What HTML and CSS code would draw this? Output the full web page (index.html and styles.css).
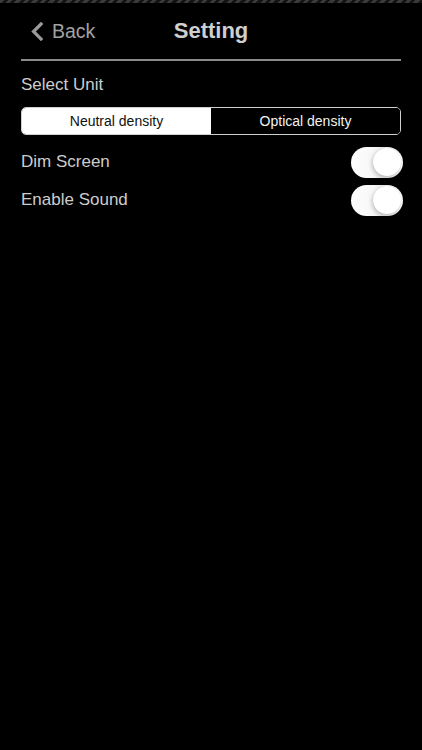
FILE: index.html
```html
<!DOCTYPE html>
<html>
<head>
<meta charset="utf-8">
<link rel="stylesheet" href="styles.css">
</head>
<body>
<div class="status"></div>
<div class="page">
  <header class="nav">
    <div class="back">
      <svg class="chev" width="14" height="19" viewBox="0 0 14 19"><path d="M11 2 L3.5 9.5 L11 17" fill="none" stroke="#9a9a9a" stroke-width="3.2" stroke-linecap="square" stroke-linejoin="miter"/></svg>
      <span>Back</span>
    </div>
    <div class="title">Setting</div>
    <div></div>
  </header>
  <div class="rule"></div>
  <div class="label">Select Unit</div>
  <div class="segmented">
    <div class="seg active">Neutral density</div>
    <div class="seg">Optical density</div>
  </div>
  <div class="rows">
    <div class="row">
      <span class="row-label">Dim Screen</span>
      <span class="toggle"><span class="knob"></span></span>
    </div>
    <div class="row">
      <span class="row-label">Enable Sound</span>
      <span class="toggle"><span class="knob"></span></span>
    </div>
  </div>
</div>
</body>
</html>
```

FILE: styles.css
```css
html, body {
  margin: 0;
  padding: 0;
  background: #000;
  height: 100%;
}
body {
  font-family: "Liberation Sans", Arial, sans-serif;
  color: #cccccc;
}
.status {
  height: 3px;
  background: repeating-linear-gradient(135deg, #3a3a3a 0 3px, #141414 3px 6px);
}
.page {
  padding: 0 21px;
}
.nav {
  height: 56px;
  display: grid;
  grid-template-columns: 1fr auto 1fr;
  align-items: center;
}
.back {
  display: flex;
  align-items: center;
  gap: 8px;
  color: #a2a2a2;
  font-size: 19.5px;
  padding-left: 9px;
}
.chev {
  display: block;
}
.title {
  font-weight: bold;
  font-size: 22px;
  color: #cfcfcf;
}
.rule {
  height: 1.5px;
  background: #8a8a8a;
}
.label {
  margin-top: 14px;
  line-height: 20px;
  font-size: 17px;
  color: #cdcdcd;
}
.segmented {
  margin-top: 12px;
  height: 28px;
  box-sizing: border-box;
  border: 1px solid #d0d0d0;
  border-radius: 5px;
  display: grid;
  grid-template-columns: 1fr 1fr;
  overflow: hidden;
}
.seg {
  display: flex;
  align-items: center;
  justify-content: center;
  font-size: 14px;
  color: #f2f2f2;
  background: #000;
}
.seg.active {
  background: #fff;
  color: #111;
}
.rows {
  margin-top: 12px;
  display: flex;
  flex-direction: column;
  gap: 7px;
}
.row {
  height: 31px;
  display: flex;
  align-items: center;
  justify-content: space-between;
}
.row-label {
  font-size: 17px;
  color: #cdcdcd;
}
.toggle {
  position: relative;
  width: 52px;
  height: 31px;
  border-radius: 16px;
  background: linear-gradient(90deg, #fff 0%, #f6f6f6 45%, #ececec 60%, #fff 100%);
  margin-right: -2px;
}
.knob {
  position: absolute;
  right: 2px;
  top: 1.5px;
  width: 28px;
  height: 28px;
  border-radius: 50%;
  background: #fff;
  box-shadow: -1px 2px 4px rgba(0, 0, 0, 0.22), 0 0 1px rgba(0, 0, 0, 0.12);
}
```
